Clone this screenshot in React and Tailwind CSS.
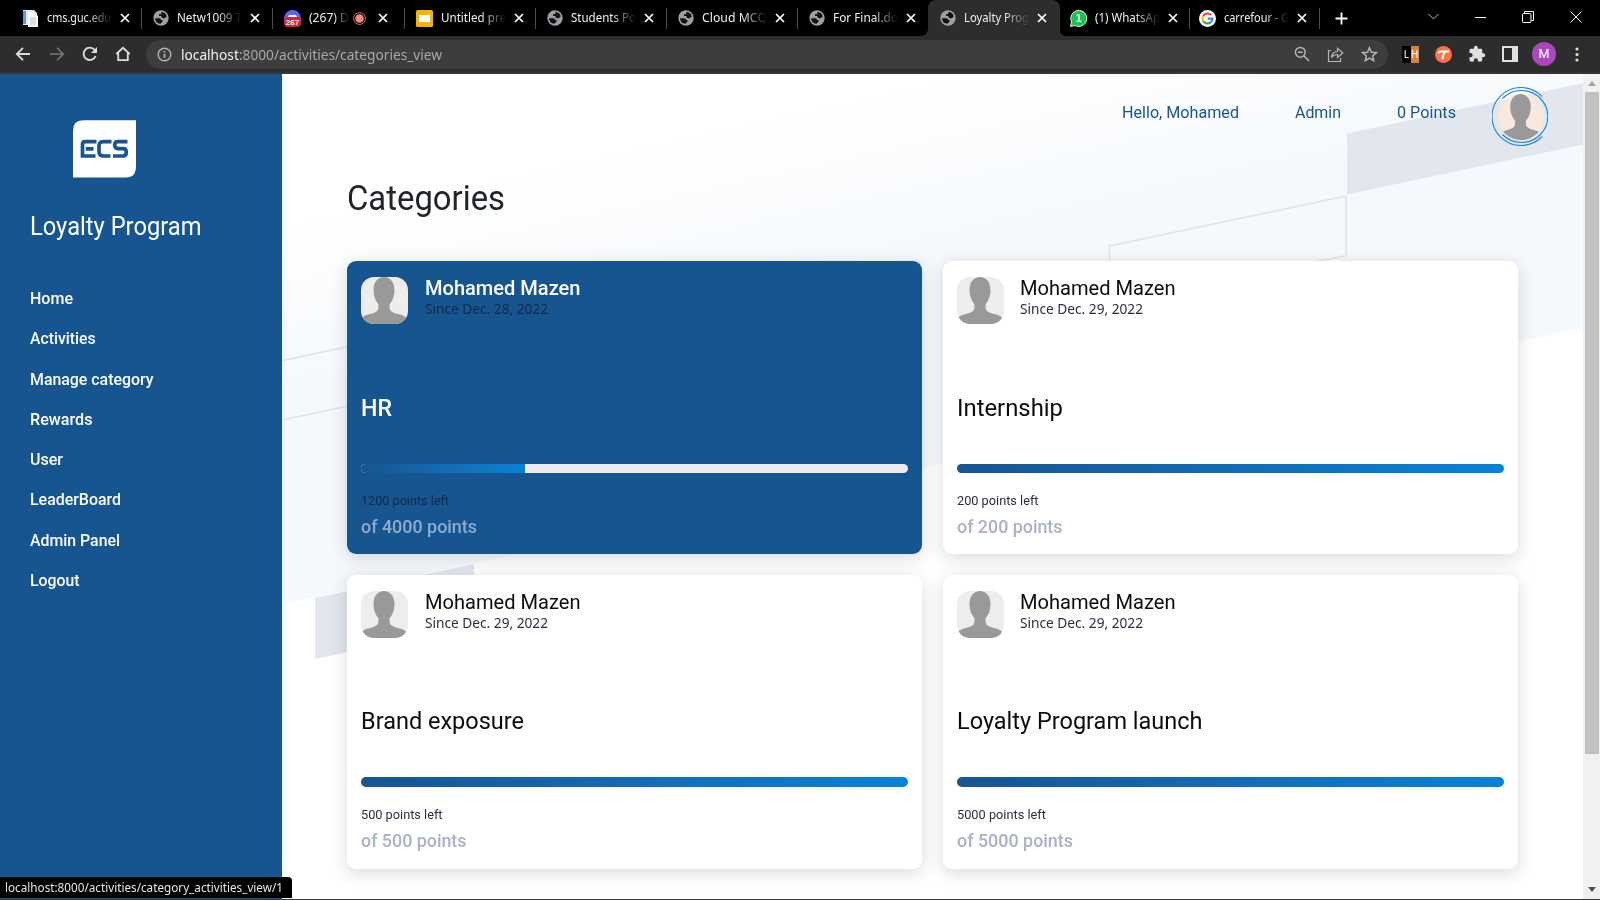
import React, { useLayoutEffect, useRef } from "react";

const UI = "font-['Noto_Sans','Open_Sans',sans-serif]";
const TI = "font-[Roboto,'Liberation_Sans',sans-serif]";

/* Text squeezed horizontally to a given width */
function Fit({ w, className = "", children }) {
  const ref = useRef(null);
  useLayoutEffect(() => {
    const el = ref.current;
    const fit = () => {
      el.style.transform = "none";
      const n = el.getBoundingClientRect().width;
      if (n) el.style.transform = `scaleX(${w / n})`;
    };
    fit();
    document.fonts?.ready.then(fit);
  }, [w]);
  return (
    <div className={"whitespace-nowrap " + className} style={{ width: w }}>
      <span ref={ref} className="inline-block origin-left">{children}</span>
    </div>
  );
}

function Globe() {
  return (
    <svg className="size-4 shrink-0" viewBox="0 0 16 16">
      <circle cx="8" cy="8" r="7.7" fill="#9aa0a6" />
      <path d="M2 8.2 6.2 8.2Q8 8.3 8 10L9.5 10 9.5 11.5 7.5 13.8Q2.3 13.2 2 8.2ZM8.6 1.9Q12.6 2 13.8 6.4L11.3 8.6 8.8 7.7 8.3 6H6V4.3H8Z" fill="#111" />
    </svg>
  );
}
const Doc = () => (
  <svg className="size-[17px] shrink-0" viewBox="0 0 17 17">
    <path d="M1 0h11l3 3v12H1z" fill="#dfe9f2" /><path d="M1 1h3v13H1z" fill="#5b9bd0" />
    <path d="M6 2h6l4 4v11H6z" fill="#f7f9fb" /><path d="M8 8h6M8 10h6M8 12h6M8 14h6" stroke="#b9c3cc" />
  </svg>
);
const Discord = () => (
  <svg className="size-[17px] shrink-0" viewBox="0 0 17 17">
    <circle cx="8.5" cy="8.5" r="8.5" fill="#5865f2" /><path d="M4 7Q5 4 7 5h3q2-1 3 2" fill="#fff" />
    <rect y="7" width="17" height="10" rx="4" fill="#dc1f2e" />
    <text x="8.5" y="15" textAnchor="middle" fontSize="8" fontWeight="700" fill="#fff" fontFamily="Liberation Sans">267</text>
  </svg>
);
const Slides = () => (
  <svg className="size-[17px] shrink-0" viewBox="0 0 17 17"><rect width="17" height="17" rx="1.5" fill="#f4b400" /><rect x="3" y="5" width="11" height="7" fill="#fff" /></svg>
);
const Whats = () => (
  <svg className="size-[17px] shrink-0" viewBox="0 0 17 17">
    <path d="M.5 16.5 1.6 12A8 8 0 1 1 5 15.5Z" fill="#19c34f" stroke="#fff" strokeWidth=".9" />
    <text x="8.6" y="12" textAnchor="middle" fontSize="10" fontWeight="700" fill="#fff" fontFamily="Liberation Sans">1</text>
  </svg>
);
const Google = () => (
  <svg className="size-[17px] shrink-0" viewBox="0 0 17 17" fill="none" strokeWidth="2.2">
    <circle cx="8.5" cy="8.5" r="8.5" fill="#fff" />
    <path d="M12.2 5.1A5 5 0 0 0 4.2 6" stroke="#ea4335" /><path d="M4.2 6a5 5 0 0 0 0 5" stroke="#fbbc05" />
    <path d="M4.2 11a5 5 0 0 0 7.7 1.1" stroke="#34a853" /><path d="M11.9 12.1A5 5 0 0 0 13.4 8.7H8.7" stroke="#4285f4" />
  </svg>
);

const tabs = [
  { icon: <Doc />, t: "cms.guc.edu", w: 70, tw: 64 },
  { icon: <Globe />, t: "Netw1009 T", w: 70, tw: 65 },
  { icon: <Discord />, t: "(267) Di", w: 45, tw: 43, rec: true },
  { icon: <Slides />, t: "Untitled pre", w: 70, tw: 65 },
  { icon: <Globe />, t: "Students Po", w: 70, tw: 65 },
  { icon: <Globe />, t: "Cloud MCQ", w: 70, tw: 65 },
  { icon: <Globe />, t: "For Final.do", w: 70, tw: 65 },
  { icon: <Globe />, t: "Loyalty Prog", w: 70, tw: 65, active: true },
  { icon: <Whats />, t: "(1) WhatsAp", w: 70, tw: 65, narrow: true },
  { icon: <Google />, t: "carrefour - G", w: 70, tw: 65, narrow: true },
];

const X = () => (
  <svg className="size-[10px] shrink-0" viewBox="0 0 10 10"><path d="M1 1l8 8M9 1l-8 8" stroke="#fff" strokeWidth="1.7" /></svg>
);

function Tab({ icon, t, w, tw, rec, active, narrow }) {
  return (
    <div className={"relative flex h-full shrink-0 items-center " + (narrow ? "w-[129.5px] pl-[10px] " : "w-[131.2px] pl-[12px] ") + (active ? "rounded-t-lg bg-[#2d2d2d]" : "")}>
      {active && (
        <svg className="absolute bottom-0 -left-2 h-2 w-[147px]" viewBox="0 0 147 8" fill="#2d2d2d">
          <path d="M0 8Q8 8 8 0V8ZM139 0Q139 8 147 8H139Z" />
        </svg>
      )}
      {icon}
      <div className="ml-[8px] [mask-image:linear-gradient(to_right,#000_62%,transparent)]" style={{ width: w - 5 }}>
        <Fit w={tw} className={"text-[12.5px] leading-[18px] text-[#f0f0f0] " + UI}>{t}</Fit>
      </div>
      {rec && (
        <svg className="ml-[4px] size-[13px]" viewBox="0 0 13 13"><circle cx="6.5" cy="6.5" r="5.9" fill="none" stroke="#e0746c" /><circle cx="6.5" cy="6.5" r="4.3" fill="#f28b82" /></svg>
      )}
      <div className={rec ? "ml-[12px] flex" : "ml-[8px] flex"}><X /></div>
    </div>
  );
}

const Sep = ({ on }) => <div className={"-mr-px h-[21px] w-px shrink-0 " + (on ? "bg-[#4c4c4c]" : "bg-transparent")} />;

function Chrome() {
  return (
    <header className="shrink-0">
      <div className="flex h-9 items-center bg-black pl-[10px]">
        {tabs.map((t, i) => (
          <React.Fragment key={t.t}>
            <Tab {...t} />
            <Sep on={i !== 6 && i !== 7} />
          </React.Fragment>
        ))}
        <svg className="ml-[16px] size-[13px]" viewBox="0 0 13 13"><path d="M6.5.5v12M.5 6.5h12" stroke="#fff" strokeWidth="1.8" /></svg>
        <div className="ml-auto flex items-center gap-[36px] pr-[18px] pb-[3px]">
          <svg className="h-[7px] w-[11px]" viewBox="0 0 11 7" fill="none"><path d="M.5 1l5 5 5-5" stroke="#bbb" /></svg>
          <svg className="h-[12px] w-[11px]" viewBox="0 0 11 12"><path d="M0 6.5h11" stroke="#fff" /></svg>
          <svg className="size-[12px]" viewBox="0 0 12 12" fill="none" stroke="#fff"><rect x=".5" y="2.5" width="8.5" height="9" rx="1" /><path d="M2.5 2.5V.5h9v9h-2" /></svg>
          <svg className="size-[12px]" viewBox="0 0 12 12"><path d="M.5.5l11 11M11.5.5l-11 11" stroke="#fff" /></svg>
        </div>
      </div>
      <div className="flex h-[38px] items-center border-b-2 border-[#363636] bg-[#2d2d2d] pl-[15px] text-[#dcdcdc]">
        <svg className="size-[16px]" viewBox="0 0 16 16" fill="none" stroke="currentColor" strokeWidth="1.8"><path d="M15 8H2M8 1.8 1.8 8 8 14.2" /></svg>
        <svg className="ml-[18px] size-[16px] text-[#777]" viewBox="0 0 16 16" fill="none" stroke="currentColor" strokeWidth="1.6"><path d="M1 8h13M8 1.8 14.2 8 8 14.2" /></svg>
        <svg className="ml-[17px] size-[16px]" viewBox="0 0 16 16" fill="none" stroke="currentColor" strokeWidth="1.9"><path d="M13.6 10A6.2 6.2 0 1 1 12.6 3.9" /><path d="M15 1v6H9z" fill="currentColor" stroke="none" /></svg>
        <svg className="ml-[17px] size-[16px]" viewBox="0 0 16 16" fill="none" stroke="currentColor" strokeWidth="1.8"><path d="M1.3 8 8 1.8 14.7 8M3.2 7v7.2h9.6V7" /></svg>
        <div className="ml-[15px] flex h-[29px] w-[1242px] items-center rounded-full bg-[#3d3d3d] pr-[10px] pl-[11px]">
          <svg className="size-[15px]" viewBox="0 0 15 15" fill="none" stroke="#b5b5b5" strokeWidth="1.4"><circle cx="7.5" cy="7.5" r="6.3" /><path d="M7.5 6.7v4M7.5 4v1.4" strokeWidth="1.7" /></svg>
          <Fit w={261} className={"ml-[9px] text-[15px] leading-[22px] text-[#a8a8a8] " + UI}><span className="text-[#f1f1f1]">localhost</span>:8000/activities/categories_view</Fit>
          <div className="ml-auto flex items-center gap-[17px] text-[#b4b4b4]">
            <svg className="size-[16px]" viewBox="0 0 16 16" fill="none" stroke="currentColor" strokeWidth="1.5"><circle cx="6.3" cy="6.3" r="4.9" /><path d="M10 10l5 5M4 6.3h4.6" /></svg>
            <svg className="size-[17px]" viewBox="0 0 17 17" fill="none" stroke="currentColor" strokeWidth="1.2"><path d="M4 4.5H1.5v11h12V12M4.5 11.5Q5 5.7 10.5 5.5V2.3L15.8 7l-5.3 4.500V8.500Q6.500 8.500 4.500 11.500Z" /></svg>
            <svg className="size-[17px]" viewBox="0 0 17 17" fill="none" stroke="currentColor" strokeWidth="1.5"><path d="M8.500 1.700 10.400 6.300 15.300 6.700 11.600 9.900 12.700 14.700 8.500 12.100 4.300 14.700 5.400 9.900 1.700 6.700 6.600 6.300Z" /></svg>
          </div>
        </div>
        <div className="ml-[14px] flex h-[17px] w-[17px] text-[10px] leading-[17px] text-white">
          <span className="w-1/2 bg-black text-center">L</span><span className="w-1/2 bg-[#d9813f] text-center">H</span>
        </div>
        <svg className="ml-[16px] size-[17px]" viewBox="0 0 17 17"><circle cx="8.5" cy="8.5" r="8.5" fill="#ff7043" /><path d="M3 7.500Q4 5.500 6 5.500H14M10.500 5.500Q8 8 7.500 13.500" fill="none" stroke="#fff" strokeWidth="2" /></svg>
        <svg className="ml-[16px] size-[18px]" viewBox="0 0 24 24" fill="#e0e0e0"><path d="M20.500 11H19V7c0-1.100-.9-2-2-2h-4V3.500a2.500 2.500 0 0 0-5 0V5H4c-1.100 0-2 .9-2 2v3.800h1.500a2.700 2.700 0 0 1 0 5.400H2V20c0 1.100.9 2 2 2h3.800v-1.500a2.700 2.700 0 0 1 5.400 0V22H17c1.100 0 2-.9 2-2v-4h1.500a2.500 2.500 0 0 0 0-5z" /></svg>
        <svg className="ml-[16px] size-[16px]" viewBox="0 0 16 16"><rect x="1" y="1" width="14" height="14" fill="none" stroke="#e0e0e0" strokeWidth="2" /><path d="M10 1h5v14h-5z" fill="#e0e0e0" /></svg>
        <div className="ml-[14px] flex size-[24px] items-center justify-center rounded-full bg-[#ab47bc] font-[Roboto] text-[12.5px] text-white">M</div>
        <svg className="ml-[19px] h-[15px] w-[4px]" viewBox="0 0 4 15" fill="#e0e0e0"><circle cx="2" cy="2" r="1.6" /><circle cx="2" cy="7.5" r="1.6" /><circle cx="2" cy="13" r="1.6" /></svg>
      </div>
    </header>
  );
}

function Person({ className, bg }) {
  return (
    <svg className={className} viewBox="0 0 47 47">
      <rect width="47" height="47" fill={bg} />
      <path d="M23 0C29 0 33.500 5 33.500 13C33.500 19 31.500 24 28.500 27.500V30C28.500 35 33 36 38 37.200C42 38.200 44.500 39.500 46 42V47H0V42C2 39.500 4 38.200 8 37.200C13 36 17.500 35 17.500 30V27.500C14.500 24 12.500 19 12.500 13C12.500 5 17 0 23 0Z" fill="#999" />
    </svg>
  );
}

const nav = [
  ["Home", 43], ["Activities", 65.5], ["Manage category", 123.5], ["Rewards", 62.5],
  ["User", 33], ["LeaderBoard", 91], ["Admin Panel", 90], ["Logout", 49.5],
];

function Sidebar() {
  return (
    <aside className="h-full w-[282px] shrink-0 bg-[#175590] pl-[30px] text-white">
      <svg className="mt-[46px] ml-[43px] h-[58px] w-[63px]" viewBox="0 0 63 58">
        <path d="M10 .3H63V46Q63 57.500 53 57.500H0V11Q0 .3 10 .3Z" fill="#fff" />
        <g fill="none" stroke="#175590" strokeWidth="3.700">
          <path d="M23.500 21.700H12Q9.500 21.700 9.500 24.500V36H22.500M12.800 28.800H20.500" />
          <path d="M38.500 21.700H30.500Q26 21.700 26 26V31.500Q26 36 30.500 36H37.500" />
          <path d="M54.500 21.700H45Q41.700 21.700 41.700 25T45 28.700H50Q53.300 28.700 53.300 32.300T50 36H40" />
        </g>
      </svg>
      <Fit w={171.5} className={"mt-[33px] text-[25px] leading-[32px] " + TI}>Loyalty Program</Fit>
      <nav className="mt-[44px] flex flex-col gap-[16.3px]">
        {nav.map(([t, w]) => <Fit key={t} w={w} className={"h-[24px] text-[16.5px] leading-[24px] font-medium " + TI}>{t}</Fit>)}
      </nav>
    </aside>
  );
}

const cards = [
  { t: "HR", tw: 31, d: "Since Dec. 28, 2022", left: "1200 points left", lw: 88, of: "of 4000 points", ow: 116, p: 30, dark: true },
  { t: "Internship", tw: 106, d: "Since Dec. 29, 2022", left: "200 points left", lw: 81.5, of: "of 200 points", ow: 105.5, p: 100 },
  { t: "Brand exposure", tw: 163, d: "Since Dec. 29, 2022", left: "500 points left", lw: 81.5, of: "of 500 points", ow: 105.5, p: 100 },
  { t: "Loyalty Program launch", tw: 245.5, d: "Since Dec. 29, 2022", left: "5000 points left", lw: 89, of: "of 5000 points", ow: 116, p: 100 },
];

function Card({ t, tw, d, left, lw, of, ow, p, dark }) {
  return (
    <article className={"rounded-[9px] px-[14px] pt-[16px] shadow-[0_4px_18px_rgba(0,0,0,0.15)] " + (dark ? "bg-[#175590]" : "bg-white")}>
      <div className="flex h-[47px]">
        <Person className="size-[47px] rounded-[13px]" bg="#ededed" />
        <div className="ml-[16.5px]">
          <Fit w={155.5} className={"text-[20.5px] leading-[22px] " + TI + (dark ? " font-medium text-white" : " text-[#0c0c0c]")}>Mohamed Mazen</Fit>
          <Fit w={123} className={"text-[13.5px] leading-[20px] " + UI + (dark ? " text-[#16294a]" : " text-[#2b2d42]")}>{d}</Fit>
        </div>
      </div>
      <Fit w={tw} className={"mt-[67.5px] text-[24.5px] leading-[32px] " + TI + (dark ? " font-medium text-white" : " text-[#0c0c0c]")}>{t}</Fit>
      <div className={"mt-[40px] h-[9.5px] overflow-hidden rounded-full " + (dark ? "bg-[#ececf0]" : "bg-[#175590]")}>
        <div className="h-full bg-linear-to-r from-[#175590] to-[#0583d7]" style={{ width: p + "%" }} />
      </div>
      <Fit w={lw} className={"mt-[18px] text-[12.5px] leading-[20px] " + TI + (dark ? " text-[#16294a]" : " text-[#2b2d42]")}>{left}</Fit>
      <Fit w={ow} className={"mt-[4px] text-[18px] leading-[24px] font-medium " + TI + (dark ? " text-[#8fabcd]" : " text-[#a9b1c9]")}>{of}</Fit>
    </article>
  );
}

function Backdrop() {
  return (
    <svg className="absolute inset-0 h-full w-full" viewBox="282 74 1301 825" preserveAspectRatio="none">
      <defs>
        <linearGradient id="sky" gradientUnits="userSpaceOnUse" x1="900" y1="90" x2="935" y2="250">
          <stop offset="0" stopColor="#fff" /><stop offset="1" stopColor="#f5f9fd" />
        </linearGradient>
      </defs>
      <path d="M282 74H1583V328L282 604Z" fill="url(#sky)" />
      <path d="M1347 133.500 1583 83V144.500L1347 194.500Z" fill="#e2e7ef" />
      <path d="M315 598 474 564V625L315 659Z" fill="#e2e7ef" />
      <path d="M1109.500 305V246L1346 196V255.500L1109.500 305M282 360.700 400 335.500M282 420 400 395" fill="none" stroke="#e1e5ea" strokeWidth="1.7" />
    </svg>
  );
}

export default function App() {
  return (
    <div className="relative flex h-[900px] w-[1600px] flex-col overflow-hidden bg-white">
      <Chrome />
      <div className="flex h-[825px] shrink-0">
        <Sidebar />
        <main className="relative h-full w-[1301px] shrink-0 overflow-hidden">
          <Backdrop />
          <div className="relative pl-[65px]">
            <div className="flex h-[72px] items-start justify-end pr-[35px] text-[#175590]">
              <Fit w={117} className={"mt-[27px] text-[16.5px] leading-[24px] " + TI}>Hello, Mohamed</Fit>
              <Fit w={46} className={"mt-[27px] ml-[56px] text-[16.5px] leading-[24px] " + TI}>Admin</Fit>
              <Fit w={59} className={"mt-[27px] ml-[56px] text-[16.5px] leading-[24px] " + TI}>0 Points</Fit>
              <div className="mt-[13px] ml-[36px] h-[59px] w-[56px]">
                <svg className="h-full w-full" viewBox="0 0 56 59">
                  <defs><clipPath id="disc"><circle cx="29" cy="30" r="23" /></clipPath></defs>
                  <g clipPath="url(#disc)"><svg x="6" y="7" width="46" height="46"><Person bg="#f8e8de" /></svg></g>
                  <g fill="none" stroke="#1d8ad8" strokeWidth="1.1">
                    <path d="M50 9.500A29 29 0 1 0 50 49.500" />
                    <path d="M10.500 11.500A26.300 26 0 1 1 10.500 47.500" />
                  </g>
                </svg>
              </div>
            </div>
            <Fit w={158} className={"mt-[30px] text-[34.5px] leading-[44px] text-[#212529] " + TI}>Categories</Fit>
            <div className="mt-[41px] grid w-[1170px] grid-cols-[575px_575px] grid-rows-[293px_294px] gap-x-[20.5px] gap-y-[20.5px]">
              {cards.map((c) => <Card key={c.t} {...c} />)}
            </div>
          </div>
        </main>
        <div className="flex h-full w-[17px] shrink-0 flex-col items-center bg-[#f1f1f1]">
          <svg className="mt-[6px] h-[6px] w-[8px]" viewBox="0 0 8 6"><path d="M4 1 8 6H0Z" fill="#a3a3a3" /></svg>
          <div className="mt-[6px] h-[662px] w-[14px] bg-[#c1c1c1]" />
          <svg className="mt-auto mb-[6px] h-[6px] w-[8px]" viewBox="0 0 8 6"><path d="M0 0H8L4 5Z" fill="#505050" /></svg>
        </div>
      </div>
      <div className="h-px shrink-0 bg-[#3a3a3a]" />
      <div className="absolute bottom-[2px] left-0 h-[21px] w-[292px] rounded-tr-[4px] bg-black pl-[5px]">
        <Fit w={278} className={"text-[12.5px] leading-[21px] text-[#e6e6e6] " + UI}>localhost:8000/activities/category_activities_view/1</Fit>
      </div>
    </div>
  );
}
